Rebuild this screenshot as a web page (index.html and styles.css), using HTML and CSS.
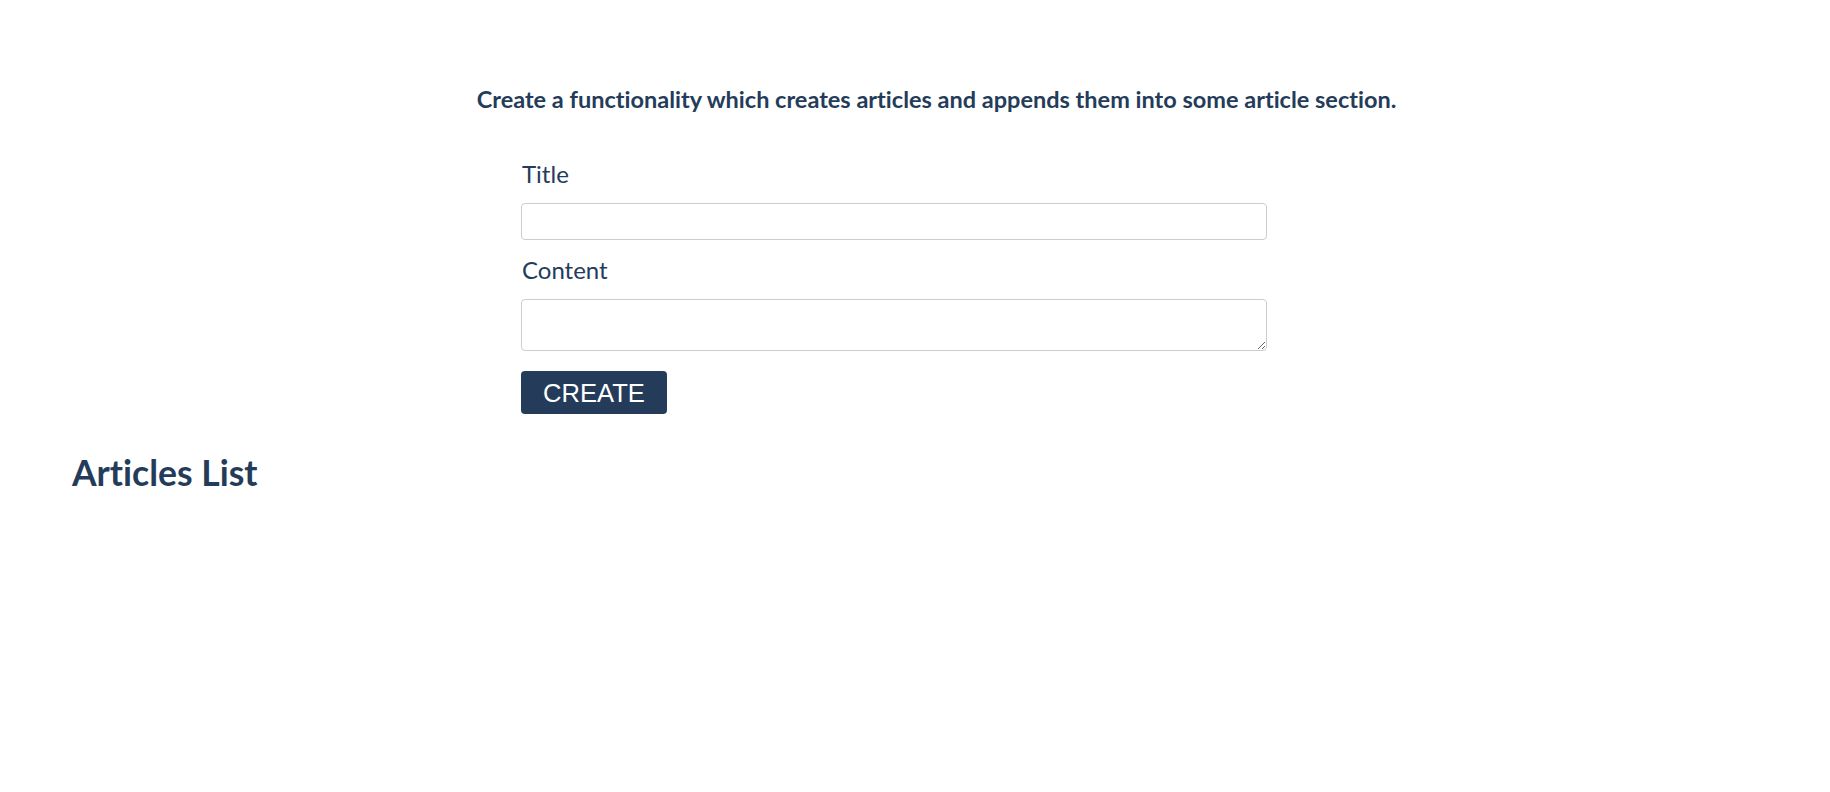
FILE: index.html
```html
<!DOCTYPE html>
<html lang="en">
<head>
<meta charset="utf-8">
<title>Articles</title>
<link rel="stylesheet" href="styles.css">
</head>
<body>
  <main class="page">
    <h1 class="intro">Create a functionality which creates articles and appends them into some article section.</h1>
    <form class="create-form">
      <label class="field-label" for="title">Title</label>
      <input class="field-input" type="text" id="title">
      <label class="field-label" for="content">Content</label>
      <textarea class="field-area" id="content"></textarea>
      <button class="create-btn" type="button">CREATE</button>
    </form>
    <section class="articles">
      <h2 class="articles-title">Articles List</h2>
    </section>
  </main>
</body>
</html>
```

FILE: styles.css
```css
* { box-sizing: border-box; }
html, body { margin: 0; padding: 0; background: #fff; }
body {
  font-family: Lato, "Open Sans", sans-serif;
  color: #243c5a;
  font-variant-ligatures: none;
}
.page {
  padding-top: 85px;
}
.intro {
  margin: 0;
  padding-left: 43px;
  text-align: center;
  font-size: 23.5px;
  font-weight: 700;
  line-height: 1.2;
}
.create-form {
  width: 746px;
  margin-left: 521px;
  margin-top: 47px;
  display: flex;
  flex-direction: column;
  align-items: flex-start;
}
.field-label {
  font-size: 24px;
  line-height: 1.2;
  font-weight: 400;
  margin-left: 1px;
  margin-bottom: 14px;
}
.field-input {
  width: 100%;
  height: 37px;
  border: 1px solid #cccccc;
  border-radius: 4px;
  margin: 0 0 16px 0;
  font-size: 16px;
  padding: 4px 8px;
}
.field-area {
  width: 100%;
  height: 52px;
  border: 1px solid #cccccc;
  border-radius: 4px;
  margin: 0;
  font-size: 16px;
  padding: 4px 8px;
  resize: vertical;
}
.create-btn {
  margin-top: 20px;
  height: 43px;
  width: 146px;
  padding: 2px 0 0 0;
  border: none;
  border-radius: 4px;
  background: #243c5a;
  color: #fff;
  font-family: "Liberation Sans", Arial, sans-serif;
  font-size: 25.6px;
  cursor: pointer;
}
.articles {
  padding-left: 72px;
  margin-top: 38px;
}
.articles-title {
  margin: 0;
  font-size: 35.5px;
  font-weight: 700;
  line-height: 1.2;
}
```
